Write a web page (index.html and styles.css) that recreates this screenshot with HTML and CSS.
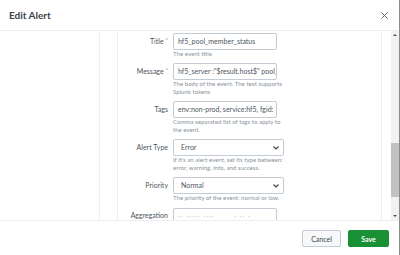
FILE: index.html
```html
<!DOCTYPE html>
<html lang="en">
<head>
    <meta charset="UTF-8">
    <meta name="viewport" content="width=device-width, initial-scale=1.0">
    <title>Edit Alert</title>
    <link rel="stylesheet" href="styles.css">
</head>
<body>
    <div class="modal">
        <div class="modal-head">
            <h2 class="modal-title">Edit Alert</h2>
            <button class="close" aria-label="Close">
                <svg width="7" height="7" viewBox="0 0 7 7"><path d="M0.5 0.5 L6.5 6.5 M6.5 0.5 L0.5 6.5" stroke="#5c6773" stroke-width="1" fill="none"/></svg>
            </button>
        </div>

        <div class="modal-body">
            <div class="scroll-area">
                <div class="gutter"></div>
                <div class="panel">
                    <div class="form">
                        <div class="row">
                            <label class="label">Title <span class="req">*</span></label>
                            <div class="control">
                                <div class="input">hf5_pool_member_status</div>
                                <div class="help">The event title</div>
                            </div>
                        </div>

                        <div class="row">
                            <label class="label">Message <span class="req">*</span></label>
                            <div class="control">
                                <div class="input">hf5_server :"$result.host$" pool_member</div>
                                <div class="help">The body of the event. The text supports Splunk tokens</div>
                            </div>
                        </div>

                        <div class="row">
                            <label class="label">Tags</label>
                            <div class="control">
                                <div class="input">env:non-prod, service:hf5, fgid:</div>
                                <div class="help">Comma separated list of tags to apply to the event.</div>
                            </div>
                        </div>

                        <div class="row">
                            <label class="label">Alert Type</label>
                            <div class="control">
                                <div class="select">
                                    <span>Error</span>
                                    <svg width="6" height="4" viewBox="0 0 6 4"><path d="M0.5 0.5 L3 3 L5.5 0.5" stroke="#3c444d" stroke-width="1.2" fill="none"/></svg>
                                </div>
                                <div class="help">If it's an alert event, set its type between: error, warning, info, and success.</div>
                            </div>
                        </div>

                        <div class="row row-priority">
                            <label class="label">Priority</label>
                            <div class="control">
                                <div class="select">
                                    <span>Normal</span>
                                    <svg width="6" height="4" viewBox="0 0 6 4"><path d="M0.5 0.5 L3 3 L5.5 0.5" stroke="#3c444d" stroke-width="1.2" fill="none"/></svg>
                                </div>
                                <div class="help">The priority of the event: normal or low.</div>
                            </div>
                        </div>

                        <div class="row row-last">
                            <label class="label">Aggregation</label>
                            <div class="control">
                                <div class="input faint">&#183;&#183; &#183;&#183;&#183;&#183;&#183; &#183;&#183;&#183;&#183; &nbsp; &nbsp; &nbsp; &#183; &#183;&#183; &#183;</div>
                            </div>
                        </div>
                    </div>
                </div>
            </div>

            <div class="scrollbar">
                <span class="arrow up"></span>
                <div class="track"><div class="thumb"></div></div>
                <span class="arrow down"></span>
            </div>
        </div>

        <div class="modal-foot">
            <button class="btn btn-cancel">Cancel</button>
            <button class="btn btn-save">Save</button>
        </div>
    </div>
</body>
</html>
```

FILE: styles.css
```css
html, body {
    margin: 0;
    padding: 0;
    background: #fff;
}

body {
    font-family: Lato, "Open Sans", sans-serif;
    color: #3c444d;
}

.modal {
    width: 399px;
    height: 255px;
    border-right: 1px solid #8c8c8c;
    display: flex;
    flex-direction: column;
    overflow: hidden;
}

/* header */
.modal-head {
    height: 30px;
    border-bottom: 1px solid #eceef1;
    display: flex;
    align-items: center;
    justify-content: space-between;
    padding: 0 11px 0 9px;
    flex-shrink: 0;
}

.modal-title {
    margin: 0;
    font-size: 10px;
    font-weight: 700;
    color: #3c444d;
}

.close {
    border: 0;
    background: none;
    padding: 0;
    width: 8px;
    height: 8px;
    display: flex;
    align-items: center;
    justify-content: center;
}

/* body */
.modal-body {
    height: 189px;
    display: flex;
    flex-shrink: 0;
    overflow: hidden;
}

.scroll-area {
    width: 391px;
    display: flex;
}

.gutter {
    width: 99px;
    flex-shrink: 0;
}

.panel {
    width: 281px;
    border-left: 1px solid #eceef1;
    border-right: 1px solid #eceef1;
    flex-shrink: 0;
}

.form {
    margin-left: 17px;
    border-left: 1px solid #eceef1;
    height: 100%;
    padding-top: 2px;
    box-sizing: border-box;
}

.row {
    display: flex;
    margin-bottom: 5px;
}

.row-priority {
    margin-bottom: 6px;
}

.label {
    width: 50px;
    margin-right: 5px;
    text-align: right;
    font-size: 7px;
    line-height: 17px;
    color: #4e5660;
    white-space: nowrap;
}

.row-last .label {
    line-height: 14px;
}

.req {
    color: #dc4e41;
    font-size: 6px;
    vertical-align: top;
    line-height: 14px;
}

.control {
    width: 112px;
}

.input {
    width: 104px;
    height: 17px;
    box-sizing: border-box;
    border: 1px solid #c3cbd4;
    border-radius: 2px;
    padding: 0 4px;
    font-size: 7px;
    line-height: 15px;
    white-space: nowrap;
    overflow: hidden;
    color: #4e5660;
}

.input.faint {
    color: #c8cdd3;
    letter-spacing: 1px;
}

.select {
    width: 111px;
    height: 17px;
    box-sizing: border-box;
    border: 1px solid #c3cbd4;
    border-radius: 2px;
    padding: 0 4px 0 7px;
    font-size: 7px;
    line-height: 15px;
    color: #4e5660;
    display: flex;
    align-items: center;
    justify-content: space-between;
}

.help {
    font-size: 6.1px;
    line-height: 8px;
    color: #8a939d;
}

/* scrollbar */
.scrollbar {
    width: 8px;
    background: #f1f1f1;
    display: flex;
    flex-direction: column;
    align-items: center;
}

.arrow {
    width: 0;
    height: 0;
    border-left: 2px solid transparent;
    border-right: 2px solid transparent;
    margin: 3px 0;
}

.arrow.up {
    border-bottom: 2px solid #505050;
}

.arrow.down {
    border-top: 2px solid #505050;
}

.track {
    flex: 1;
    width: 8px;
    position: relative;
}

.thumb {
    position: absolute;
    top: 104px;
    left: 0;
    width: 8px;
    height: 54px;
    background: #c1c1c1;
}

/* footer */
.modal-foot {
    flex: 1;
    border-top: 1px solid #eceef1;
    display: flex;
    justify-content: flex-end;
    align-items: flex-start;
    gap: 7px;
    padding: 9px 10px 0 0;
}

.btn {
    height: 17px;
    border-radius: 2px;
    font-family: Lato, "Open Sans", sans-serif;
    font-size: 7px;
    padding: 0;
    cursor: pointer;
}

.btn-cancel {
    width: 39px;
    background: #f7f8fa;
    border: 1px solid #c3cbd4;
    color: #3c444d;
}

.btn-save {
    width: 41px;
    background: #1a9035;
    border: 1px solid #1a9035;
    color: #fff;
    font-weight: 700;
}
```
